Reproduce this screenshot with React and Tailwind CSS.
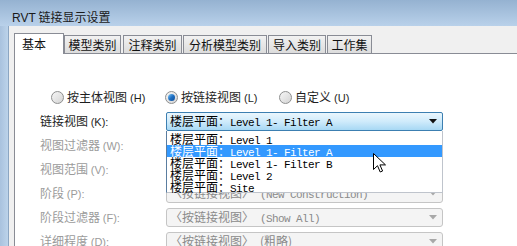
const CJK = { fontFamily: '"Noto Sans CJK SC", "Liberation Sans", sans-serif' }

const TABS = [
  { label: '模型类别', cls: 'w-[57px]' },
  { label: '注释类别', cls: 'w-[59px] ml-[2px]' },
  { label: '分析模型类别', cls: 'w-[84px] ml-[1px]' },
  { label: '导入类别', cls: 'w-[58px] ml-[1px]' },
  { label: '工作集', cls: 'w-[45px] ml-[1px]' },
]

const LEVELS = ['Level 1', 'Level 1- Filter A', 'Level 1- Filter B', 'Level 2', 'Site']

const ROWS = [
  { label: '视图过滤器', key: 'W', value: null },
  { label: '视图范围', key: 'V', value: null },
  { label: '阶段', key: 'P', value: '(New Construction)' },
  { label: '阶段过滤器', key: 'F', value: '(Show All)' },
  { label: '详细程度', key: 'D', value: '(粗略)' },
]

function Mono({ children }) {
  return (
    <span className="text-[11px] tracking-[-0.6px]" style={{ fontFamily: '"Liberation Mono", "Noto Sans CJK SC", monospace' }}>
      {children}
    </span>
  )
}

function Radio({ checked, label, hot, className }) {
  return (
    <div className={`flex items-center h-[16px] ${className}`}>
      <span className="w-[13px] h-[13px] rounded-full border border-[#8e8f8f] bg-gradient-to-br from-[#f6f6f6] to-[#d4d4d4] flex items-center justify-center">
        {checked && (
          <span className="w-[7px] h-[7px] rounded-full bg-gradient-to-br from-[#7cc8f7] via-[#1e6fc2] to-[#0d4c99]" />
        )}
      </span>
      <span className="ml-[3px] text-[12px] leading-[16px] text-[#1e1e1e]">
        {label}
        <span className="ml-[3px] text-[11px]" style={{ fontFamily: '"Liberation Sans", sans-serif' }}>({hot})</span>
      </span>
    </div>
  )
}

function Arrow({ color }) {
  return (
    <svg width="8" height="5" viewBox="0 0 8 5" className="mr-[5px]">
      <path d="M0 0h8L4 4.5z" fill={color} />
    </svg>
  )
}

function DisabledCombo({ value }) {
  return (
    <div className="w-[277px] h-[19px] rounded-[3px] border border-[#c5c5c5] bg-[#f4f4f4] flex items-center justify-between pl-[3px] text-[#8a8a8a]">
      <span className="text-[12px] leading-[17px] whitespace-nowrap">
        {value && (
          <>
            〈按链接视图〉<Mono> {value.startsWith('(粗') ? '' : value}</Mono>
            {value.startsWith('(粗') && <span> (粗略)</span>}
          </>
        )}
      </span>
      <Arrow color="#a8a8a8" />
    </div>
  )
}

export default function App() {
  return (
    <div className="relative w-[517px] h-[246px] overflow-hidden flex flex-col bg-[#b2cae4]" style={CJK}>
      <div className="h-px bg-[#3e3e3e]" />
      <div className="h-[28px] bg-gradient-to-b from-[#95b2d1] to-[#b9d1ea] pl-[12px] pt-[9px] text-[12px] leading-[16px] text-[#1a1a1a]">
        <span style={{ fontFamily: '"Liberation Sans", sans-serif' }}>RVT</span> 链接显示设置
      </div>

      <div className="flex flex-1">
        <div className="w-[9px] bg-gradient-to-r from-[#a9c2de] to-[#bcd3ea] border-r border-[#8ca6c2]" />

        <div className="flex-1 bg-[#f0f0f0] pt-[7px] pl-[5px] flex flex-col">
          <div className="flex items-end h-[20px] relative z-10">
            <div className="w-[50px] h-[21px] -mb-px bg-white border border-b-0 border-[#898c95] pl-[7px] pt-[2px] text-[12px] leading-[16px] text-[#111]">
              基本
            </div>
            {TABS.map((t) => (
              <div
                key={t.label}
                className={`h-[18px] border border-b-0 border-[#898c95] bg-gradient-to-b from-[#f2f2f2] to-[#dcdcdc] text-center text-[12px] leading-[17px] text-[#111] ${t.cls}`}
              >
                {t.label}
              </div>
            ))}
          </div>

          <div className="flex-1 bg-white border-l border-t border-[#898c95] pl-[25px]">
            <div className="flex mt-[35px] ml-[11px]">
              <Radio label="按主体视图" hot="H" className="w-[114px]" />
              <Radio checked label="按链接视图" hot="L" className="w-[114px]" />
              <Radio label="自定义" hot="U" />
            </div>

            <div className="flex flex-col gap-[5px] mt-[7px]">
              <div className="flex h-[19px] items-center">
                <span className="w-[126px] text-[12px] leading-[19px] text-[#1e1e1e] whitespace-nowrap">
                  链接视图 <span className="text-[11px]" style={{ fontFamily: '"Liberation Sans", sans-serif' }}>(K):</span>
                </span>
                <div className="relative">
                  <div className="w-[277px] h-[19px] border border-[#3c7fb1] rounded-[2px] bg-gradient-to-b from-[#eaf6fd] via-[#cfebfb] to-[#a7d8f4] flex items-center justify-between pl-[3px] text-black">
                    <span className="text-[12px] leading-[17px] whitespace-nowrap">
                      楼层平面：<Mono>Level 1- Filter A</Mono>
                    </span>
                    <Arrow color="#111" />
                  </div>

                  <div className="absolute left-0 top-[19px] z-20 w-[277px] h-[62px] bg-white border border-t-0 border-[#bfc4cc] border-l-[#5a7da0] pt-[2px]">
                    {LEVELS.map((lv) => {
                      const sel = lv === 'Level 1- Filter A'
                      return (
                        <div
                          key={lv}
                          className={`h-[12px] leading-[12px] pl-[3px] text-[12px] whitespace-nowrap ${sel ? 'bg-[#3399ff] text-white' : 'text-black'}`}
                        >
                          楼层平面：<Mono>{lv}</Mono>
                        </div>
                      )
                    })}
                  </div>
                </div>
              </div>

              {ROWS.map((r) => (
                <div key={r.key} className="flex h-[19px] items-center">
                  <span className="w-[126px] text-[12px] leading-[19px] text-[#9b9b9b] whitespace-nowrap">
                    {r.label} <span className="text-[11px]" style={{ fontFamily: '"Liberation Sans", sans-serif' }}>({r.key}):</span>
                  </span>
                  <DisabledCombo value={r.value} />
                </div>
              ))}
            </div>
          </div>
        </div>
      </div>

      <svg className="absolute left-[373px] top-[153px] z-30" width="13" height="21" viewBox="0 0 13 21">
        <path d="M0.5 0.5v16l4-3.8 2.7 6.3 2.4-1-2.7-6.1h5.6z" fill="#fff" stroke="#000" strokeWidth="1" strokeLinejoin="miter" />
      </svg>
    </div>
  )
}
